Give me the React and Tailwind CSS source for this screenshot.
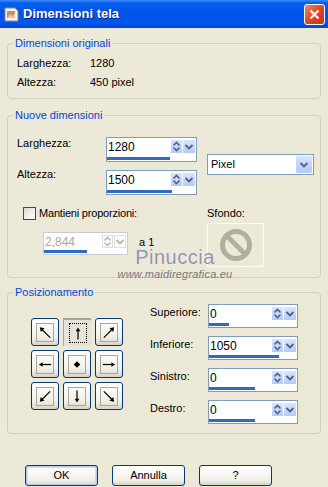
import React from 'react'

const font = { fontFamily: '"Liberation Sans", Arial, sans-serif' }

function SpinArrows({ disabled }) {
  const c = disabled ? '#B8B8B0' : '#4D6185'
  const bg = disabled
    ? 'bg-white border border-[#E2E0D6]'
    : 'bg-[linear-gradient(to_bottom,#D9E4FE,#B7CAF7)]'
  return (
    <div className="flex gap-[1px] mt-[2px] mr-[1px] shrink-0">
      <div className={`w-[11px] h-[13px] ${bg} flex items-center justify-center`}>
        <svg width="9" height="11" viewBox="0 0 9 11">
          <path d="M1.5 4.5 L4.5 1.5 L7.5 4.5" fill="none" stroke={c} strokeWidth="1.6" />
          <path d="M1.5 6.5 L4.5 9.5 L7.5 6.5" fill="none" stroke={c} strokeWidth="1.6" />
        </svg>
      </div>
      <div className={`w-[12px] h-[13px] ${bg} flex items-center justify-center`}>
        <svg width="10" height="8" viewBox="0 0 10 8">
          <path d="M1.5 2 L5 5.5 L8.5 2" fill="none" stroke={c} strokeWidth="1.8" />
        </svg>
      </div>
    </div>
  )
}

function Spin({ value, bar, className, disabled }) {
  return (
    <div
      className={`flex flex-col border ${
        disabled ? 'border-[#C8CCD8] text-[#ACA899]' : 'border-[#7F9DB9] text-black'
      } bg-white ${className}`}
    >
      <div className="flex flex-1 items-start">
        <span className="flex-1 pl-[1px] pt-[3px] leading-[13px] text-[12px]">{value}</span>
        <SpinArrows disabled={disabled} />
      </div>
      <div className="h-[3px] mb-[1px] bg-white">
        <div className="h-full bg-[#316AC5]" style={{ width: `${bar}px` }} />
      </div>
    </div>
  )
}

function Group({ title, className, children }) {
  return (
    <fieldset className={`border border-[#D0D0BF] rounded-[4px] ${className}`}>
      <legend className="ml-[5px] px-[2px] text-[11px] leading-[14px] text-[#0046D5]">{title}</legend>
      {children}
    </fieldset>
  )
}

function Arrow({ dir }) {
  const s = { stroke: '#000', strokeWidth: 1.3, fill: 'none' }
  const paths = {
    nw: (
      <>
        <path d="M14 14 L4 4" {...s} />
        <path d="M3 3 L8 4 L4 8 Z" fill="#000" />
      </>
    ),
    n: (
      <>
        <path d="M8.5 15 L8.5 4" {...s} />
        <path d="M8.5 2 L6 6 L11 6 Z" fill="#000" />
      </>
    ),
    ne: (
      <>
        <path d="M3 14 L13 4" {...s} />
        <path d="M14 3 L9 4 L13 8 Z" fill="#000" />
      </>
    ),
    w: (
      <>
        <path d="M15 8.5 L4 8.5" {...s} />
        <path d="M2 8.5 L6 6 L6 11 Z" fill="#000" />
      </>
    ),
    c: <path d="M8.5 5 L12 8.5 L8.5 12 L5 8.5 Z" fill="#000" />,
    e: (
      <>
        <path d="M2 8.5 L13 8.5" {...s} />
        <path d="M15 8.5 L11 6 L11 11 Z" fill="#000" />
      </>
    ),
    sw: (
      <>
        <path d="M14 3 L4 13" {...s} />
        <path d="M3 14 L4 9 L8 13 Z" fill="#000" />
      </>
    ),
    s: (
      <>
        <path d="M8.5 2 L8.5 13" {...s} />
        <path d="M8.5 15 L6 11 L11 11 Z" fill="#000" />
      </>
    ),
    se: (
      <>
        <path d="M3 3 L13 13" {...s} />
        <path d="M14 14 L9 13 L13 9 Z" fill="#000" />
      </>
    ),
  }
  return (
    <svg width="17" height="17" viewBox="0 0 17 17">
      {paths[dir]}
    </svg>
  )
}

function PosButton({ dir, active }) {
  if (active) {
    return (
      <div className="w-[28px] h-[28px] border-t-2 border-l border-[#A9A595] bg-[#E6E3D8] flex items-center justify-center">
        <div className="w-[18px] h-[20px] border border-dotted border-black flex items-center justify-center">
          <Arrow dir={dir} />
        </div>
      </div>
    )
  }
  return (
    <div className="w-[28px] h-[28px] rounded-[3px] border border-[#003C74] bg-[linear-gradient(to_bottom,#FFFFFF,#F1EFE8_70%,#D8D3C6)] flex items-center justify-center">
      <div className="w-[18px] h-[19px] border border-[#ACA899] flex items-center justify-center">
        <Arrow dir={dir} />
      </div>
    </div>
  )
}

function XpButton({ children, def }) {
  return (
    <button
      className={`w-[73px] h-[21px] rounded-[3px] border border-[#003C74] bg-[linear-gradient(to_bottom,#FFFFFF,#F0EFE9_75%,#D6D0C5)] text-[11px] leading-[13px] text-black ${
        def ? 'shadow-[inset_0_0_0_1px_#B8CCF0,inset_0_0_0_2px_#CFDDF7]' : ''
      }`}
    >
      {children}
    </button>
  )
}

export default function App() {
  const dirs = ['nw', 'n', 'ne', 'w', 'c', 'e', 'sw', 's', 'se']
  const offsets = [
    { label: 'Superiore:', value: '0', bar: 20 },
    { label: 'Inferiore:', value: '1050', bar: 70 },
    { label: 'Sinistro:', value: '0', bar: 46 },
    { label: 'Destro:', value: '0', bar: 46 },
  ]

  return (
    <div className="relative w-[328px] h-[487px] overflow-hidden bg-[#ECE9D8] text-[11px] text-black" style={font}>
      {/* title bar */}
      <div className="h-[28px] flex items-center bg-[linear-gradient(to_bottom,#3C8CF8_0%,#0A5EEE_10%,#0054E6_45%,#0056EC_80%,#0045D2_100%)]">
        <svg className="ml-[4px]" width="15" height="15" viewBox="0 0 15 15">
          <path d="M1 1 H11 L14 4 V14 H1 Z" fill="#F4F2EA" stroke="#8C8C8C" strokeWidth="1" />
          <rect x="3" y="4" width="8" height="7" fill="#C98A68" />
          <path d="M3 11 L6 7 L8 9 L11 6 V11 Z" fill="#E9C2A4" />
        </svg>
        <span className="ml-[4px] text-[13px] font-bold text-white [text-shadow:1px_1px_0_#0A1E8C]">
          Dimensioni tela
        </span>
        <div className="ml-auto mr-[3px] w-[21px] h-[21px] rounded-[3px] border border-white bg-[linear-gradient(135deg,#F08A6E,#E0462A_50%,#C83418)] flex items-center justify-center">
          <svg width="11" height="11" viewBox="0 0 11 11">
            <path d="M1.5 1.5 L9.5 9.5 M9.5 1.5 L1.5 9.5" stroke="#fff" strokeWidth="2.2" />
          </svg>
        </div>
      </div>

      <div className="px-[7px]">
        <Group title="Dimensioni originali" className="mt-[8px] h-[63px]">
          <div className="pl-[9px] pt-[4px] leading-[19px]">
            <div className="flex">
              <span className="w-[73px]">Larghezza:</span>
              <span>1280</span>
            </div>
            <div className="flex">
              <span className="w-[73px]">Altezza:</span>
              <span>450 pixel</span>
            </div>
          </div>
        </Group>

        <Group title="Nuove dimensioni" className="mt-[9px] h-[170px]">
          <div className="pl-[9px]">
            <div className="flex pt-[15px]">
              <div className="flex flex-col gap-[8px]">
                <div className="flex">
                  <span className="w-[89px] leading-[13px]">Larghezza:</span>
                  <Spin value="1280" bar={63} className="w-[91px] h-[25px]" />
                </div>
                <div className="flex">
                  <span className="w-[89px] leading-[13px] -mt-[2px]">Altezza:</span>
                  <Spin value="1500" bar={65} className="w-[91px] h-[25px]" />
                </div>
              </div>
              <div className="ml-[10px] mt-[17px] w-[107px] h-[21px] border border-[#7F9DB9] bg-white flex items-center">
                <span className="flex-1 pl-[3px] text-[11px]">Pixel</span>
                <div className="w-[16px] h-[17px] mr-[1px] rounded-[2px] bg-[linear-gradient(to_bottom,#D9E4FE,#B4C8F6)] flex items-center justify-center">
                  <svg width="10" height="8" viewBox="0 0 10 8">
                    <path d="M1.5 2 L5 5.5 L8.5 2" fill="none" stroke="#4D6185" strokeWidth="1.8" />
                  </svg>
                </div>
              </div>
            </div>

            <div className="flex mt-[12px]">
              <div className="w-[190px]">
                <div className="flex items-center ml-[6px] h-[13px]">
                  <div className="w-[13px] h-[13px] border border-[#1C5180] bg-[linear-gradient(135deg,#DCDBD4,#FFFFFF)]" />
                  <span className="ml-[3px] leading-[13px] text-[11px] tracking-[-0.2px]">Mantieni proporzioni:</span>
                </div>
                <div className="flex items-center mt-[12px] ml-[26px]">
                  <Spin value="2,844" bar={43} disabled className="w-[85px] h-[23px]" />
                  <span className="ml-[11px] -mt-[3px] text-[11px] leading-[11px]">a 1</span>
                </div>
              </div>
              <div>
                <div className="leading-[13px] text-[11px]">Sfondo:</div>
                <div className="mt-[3px] w-[57px] h-[44px] border border-[#FDFDFB] flex items-center justify-center">
                  <svg width="34" height="34" viewBox="0 0 34 34">
                    <circle cx="17" cy="17" r="13.5" fill="none" stroke="#B2AEA2" strokeWidth="5" />
                    <path d="M8 8 L26 26" stroke="#B2AEA2" strokeWidth="5" />
                  </svg>
                </div>
              </div>
            </div>
          </div>
        </Group>

        <Group title="Posizionamento" className="mt-[7px] h-[149px]">
          <div className="pl-[9px] flex">
            <div className="ml-[14px] mt-[19px] grid grid-cols-3 gap-[4px] h-fit">
              {dirs.map((d) => (
                <PosButton key={d} dir={d} active={d === 'n'} />
              ))}
            </div>
            <div className="ml-[27px] pt-[5px] flex flex-col gap-[8px]">
              {offsets.map((o) => (
                <div key={o.label} className="flex">
                  <span className="w-[58px] pt-[2px] leading-[13px] text-[11px]">{o.label}</span>
                  <Spin value={o.value} bar={o.bar} className="w-[90px] h-[24px]" />
                </div>
              ))}
            </div>
          </div>
        </Group>

        <div className="mt-[31px] ml-[18px] flex gap-[14px]">
          <XpButton def>OK</XpButton>
          <XpButton>Annulla</XpButton>
          <XpButton>?</XpButton>
        </div>
      </div>

      {/* watermark */}
      <div className="absolute left-[114px] top-[249px] w-[122px] flex flex-col items-center pointer-events-none">
        <span className="text-[20px] leading-[17px] text-[#9194AE] tracking-[0.5px] [text-shadow:0_0_1px_#fff]">
          Pinuccia
        </span>
        <span className="mt-[3px] text-[11px] leading-[11px] italic text-[#777] tracking-[0.2px]">
          www.maidiregrafica.eu
        </span>
      </div>
    </div>
  )
}
